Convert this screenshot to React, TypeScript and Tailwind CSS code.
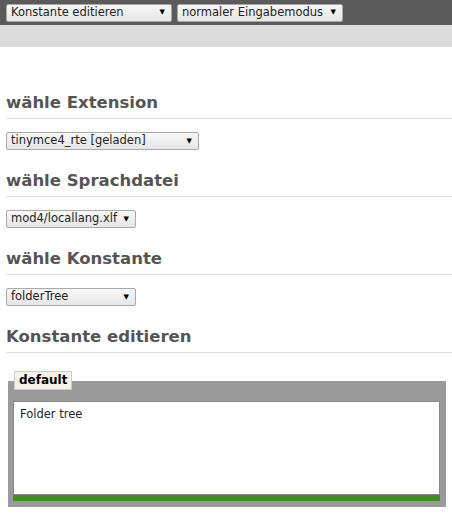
const font = { fontFamily: '"DejaVu Sans", Verdana, sans-serif' }

function FakeSelect({ label, width }: { label: string; width: string }) {
  return (
    <div
      className={`flex items-center justify-between h-[18px] ${width} pl-[4px] pr-[6px] border border-[#a9a9a9] rounded-[2px] bg-gradient-to-b from-[#f8f8f8] to-[#e6e6e6] text-[11.5px] text-[#222]`}
    >
      <span className="whitespace-nowrap">{label}</span>
      <span className="text-[7px] text-black">▼</span>
    </div>
  )
}

function Section({ title, children }: { title: string; children?: React.ReactNode }) {
  return (
    <div className="pl-[6px]">
      <h2 className="text-[16.5px] font-bold text-[#555] leading-[22px] pb-[4px] border-b border-[#ddd]">{title}</h2>
      {children && <div className="pt-[13px] pb-[20px]">{children}</div>}
    </div>
  )
}

export default function App() {
  return (
    <div className="w-[452px] h-[513px] bg-white overflow-hidden" style={font}>
      <div className="h-[25px] bg-[#5a5a5a] flex items-center gap-[5px] px-[6px]">
        <FakeSelect label="Konstante editieren" width="w-[166px]" />
        <FakeSelect label="normaler Eingabemodus" width="w-[166px]" />
      </div>
      <div className="h-[22px] bg-[#dcdcdc]" />
      <div className="pt-[45px]">
        <Section title="wähle Extension">
          <FakeSelect label="tinymce4_rte [geladen]" width="w-[193px]" />
        </Section>
        <Section title="wähle Sprachdatei">
          <FakeSelect label="mod4/locallang.xlf" width="w-[130px]" />
        </Section>
        <Section title="wähle Konstante">
          <FakeSelect label="folderTree" width="w-[130px]" />
        </Section>
        <Section title="Konstante editieren" />
        <div className="pl-[8px] pr-[6px] pt-[28px]">
          <div className="relative">
            <div className="absolute left-[6px] top-[-10px] h-[19px] px-[4px] border border-[#ccc] bg-[#f5f3e8] text-[12px] font-bold text-black leading-[17px]">
              default
            </div>
          </div>
          <div className="bg-[#9a9a9a] pt-[20px] pl-[5px] pr-[6px] pb-[6px]">
            <div className="h-[94px] bg-white border border-[#888] px-[6px] py-[4px] text-[11.5px] text-[#222]">Folder tree</div>
            <div className="h-[6px] bg-[#3f8f1e]" />
          </div>
        </div>
      </div>
    </div>
  )
}
